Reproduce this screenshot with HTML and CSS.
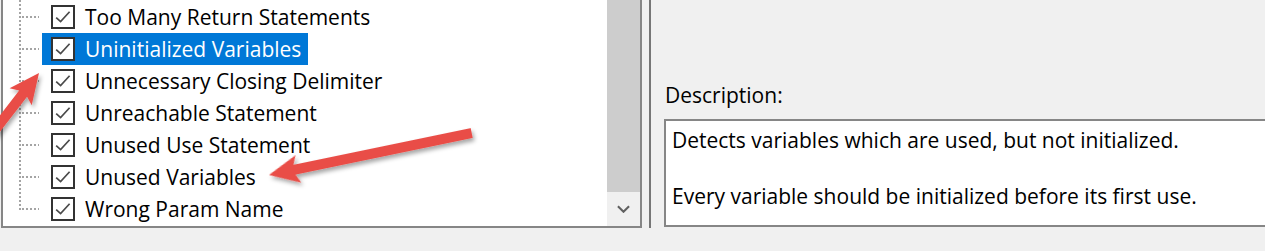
FILE: index.html
```html
<!DOCTYPE html>
<html>
<head>
<meta charset="utf-8">
<link rel="stylesheet" href="styles.css">
</head>
<body>
<div class="window">
  <div class="tree-panel">
    <div class="tree">
      <div class="row"><span class="branch"></span><span class="item"><span class="check"><svg viewBox="0 0 20 20"><path d="M3.2 10.6 L7.6 14.6 L16.6 4.8"/></svg></span><span class="label">Too Many Return Statements</span></span></div>
      <div class="row"><span class="branch"></span><span class="item selected"><span class="check"><svg viewBox="0 0 20 20"><path d="M3.2 10.6 L7.6 14.6 L16.6 4.8"/></svg></span><span class="label">Uninitialized Variables</span></span></div>
      <div class="row"><span class="branch"></span><span class="item"><span class="check"><svg viewBox="0 0 20 20"><path d="M3.2 10.6 L7.6 14.6 L16.6 4.8"/></svg></span><span class="label">Unnecessary Closing Delimiter</span></span></div>
      <div class="row"><span class="branch"></span><span class="item"><span class="check"><svg viewBox="0 0 20 20"><path d="M3.2 10.6 L7.6 14.6 L16.6 4.8"/></svg></span><span class="label">Unreachable Statement</span></span></div>
      <div class="row"><span class="branch"></span><span class="item"><span class="check"><svg viewBox="0 0 20 20"><path d="M3.2 10.6 L7.6 14.6 L16.6 4.8"/></svg></span><span class="label">Unused Use Statement</span></span></div>
      <div class="row"><span class="branch"></span><span class="item"><span class="check"><svg viewBox="0 0 20 20"><path d="M3.2 10.6 L7.6 14.6 L16.6 4.8"/></svg></span><span class="label">Unused Variables</span></span></div>
      <div class="row last"><span class="branch"></span><span class="item"><span class="check"><svg viewBox="0 0 20 20"><path d="M3.2 10.6 L7.6 14.6 L16.6 4.8"/></svg></span><span class="label">Wrong Param Name</span></span></div>
    </div>
    <div class="scrollbar">
      <div class="thumb"></div>
      <div class="down"><svg viewBox="0 0 14 8"><path d="M1 1 L7 7 L13 1"/></svg></div>
    </div>
  </div>
  <div class="splitter"></div>
  <div class="details">
    <div class="desc-label">Description:</div>
    <div class="desc-box">
      <p>Detects variables which are used, but not initialized.</p>
      <p>Every variable should be initialized before its first use.</p>
    </div>
  </div>
  <svg class="arrows" viewBox="0 0 1265 251" width="1265" height="251">
    <defs>
      <filter id="shadow" x="-20%" y="-50%" width="140%" height="200%">
        <feDropShadow dx="2" dy="3" stdDeviation="2" flood-color="#000" flood-opacity="0.35"/>
      </filter>
    </defs>
    <g filter="url(#shadow)" fill="#e94d47">
      <polygon transform="translate(39 73) rotate(127.7)" points="0,0 30,-14 26,-5 90,-5 90,5 26,5 30,14"/>
      <polygon transform="translate(269 175) rotate(-11.7)" points="0,0 30,-14 26,-5 207,-5 207,5 26,5 30,14"/>
    </g>
  </svg>
</div>
</body>
</html>
```

FILE: styles.css
```css
html, body {
  margin: 0;
  padding: 0;
}

body {
  width: 1265px;
  height: 251px;
  overflow: hidden;
  background: #f0f0f0;
  font-family: "Open Sans", "Noto Sans", sans-serif;
  font-size: 21px;
  color: #000;
}

.window {
  position: relative;
  display: flex;
  align-items: flex-start;
  width: 1265px;
  height: 251px;
}

/* ---------- tree list ---------- */
.tree-panel {
  margin-left: 1px;
  width: 641px;
  height: 228px;
  box-sizing: border-box;
  border-left: 2px solid #868686;
  border-right: 2px solid #868686;
  border-bottom: 2px solid #868686;
  background: #fff;
  display: flex;
}

.tree {
  flex: 1;
  padding-top: 1px;
}

.row {
  display: flex;
  height: 32px;
  position: relative;
}

.branch {
  width: 39px;
  flex: none;
  position: relative;
}

.branch::before {
  content: "";
  position: absolute;
  left: 16px;
  top: -1px;
  bottom: 0;
  width: 2px;
  background: repeating-linear-gradient(to bottom, #a4a4a4 0 2px, transparent 2px 4px);
}

.row.last .branch::before {
  bottom: 14px;
}

.branch::after {
  content: "";
  position: absolute;
  left: 19px;
  top: 15px;
  width: 17px;
  height: 2px;
  background: repeating-linear-gradient(to right, #a4a4a4 0 2px, transparent 2px 4px);
}

.item {
  display: flex;
  align-items: center;
  gap: 10px;
  padding: 0 7px 0 9px;
  height: 32px;
  line-height: 32px;
  white-space: nowrap;
}

.item.selected {
  background: #0078d7;
  color: #fff;
}

.check {
  width: 24px;
  height: 24px;
  box-sizing: border-box;
  border: 2px solid #333;
  background: #fff;
  display: flex;
  align-items: center;
  justify-content: center;
  flex: none;
}

.check svg {
  width: 20px;
  height: 20px;
  fill: none;
  stroke: #4a4a4a;
  stroke-width: 1.7;
}

/* ---------- scrollbar ---------- */
.scrollbar {
  width: 33px;
  flex: none;
  display: flex;
  flex-direction: column;
  background: #f0f0f0;
}

.thumb {
  flex: 1;
  background: #cdcdcd;
}

.down {
  height: 34px;
  display: flex;
  align-items: center;
  justify-content: center;
}

.down svg {
  width: 13px;
  height: 8px;
  fill: none;
  stroke: #606060;
  stroke-width: 2.2;
}

/* ---------- splitter ---------- */
.splitter {
  margin-left: 7px;
  width: 2px;
  height: 228px;
  background: #767676;
  flex: none;
}

/* ---------- description ---------- */
.details {
  flex: 1;
  margin-left: 13px;
  padding-top: 81px;
}

.desc-label {
  line-height: 28px;
  padding-left: 1px;
}

.desc-box {
  margin-top: 10px;
  height: 108px;
  box-sizing: border-box;
  border: 2px solid #868686;
  border-right: none;
  background: #fff;
  padding: 5px 0 0 6px;
  line-height: 28px;
}

.desc-box p {
  margin: 0;
  white-space: nowrap;
}

.desc-box p + p {
  margin-top: 28px;
}

/* ---------- annotation arrows ---------- */
.arrows {
  position: absolute;
  left: 0;
  top: 0;
  pointer-events: none;
}
```
